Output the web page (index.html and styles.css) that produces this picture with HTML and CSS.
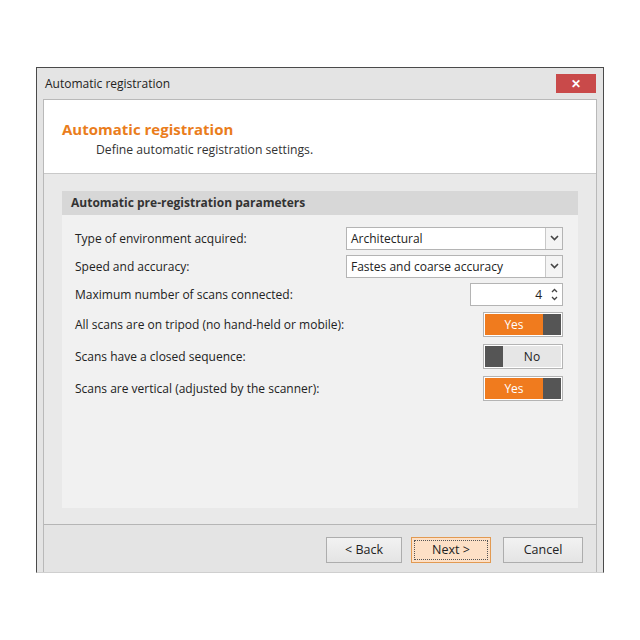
FILE: index.html
```html
<!DOCTYPE html>
<html>
  <head>
    <title>Automatic registration</title>
    <link rel="stylesheet" href="styles.css">
  </head>
  <body>
    <div class="window">
      <div class="titlebar">
        <span class="caption">Automatic registration</span>
        <a class="close">&#x2715;</a>
      </div>
      <div class="content">
        <div class="header">
          <div class="title">Automatic registration</div>
          <div class="subtitle">Define automatic registration settings.</div>
        </div>
        <div class="body">
          <div class="group">
            <div class="group-title">Automatic pre-registration parameters</div>
            <div class="rows">
              <div class="row">
                <span class="label">Type of environment acquired:</span>
                <div class="combo">
                  <span class="value">Architectural</span>
                  <span class="arrow"><svg width="9" height="6" viewBox="0 0 9 6"><path d="M1 1l3.5 3.5L8 1" fill="none" stroke="#444" stroke-width="1.6"/></svg></span>
                </div>
              </div>
              <div class="row">
                <span class="label">Speed and accuracy:</span>
                <div class="combo">
                  <span class="value">Fastes and coarse accuracy</span>
                  <span class="arrow"><svg width="9" height="6" viewBox="0 0 9 6"><path d="M1 1l3.5 3.5L8 1" fill="none" stroke="#444" stroke-width="1.6"/></svg></span>
                </div>
              </div>
              <div class="row">
                <span class="label">Maximum number of scans connected:</span>
                <div class="spin">
                  <span class="value">4</span>
                  <span class="spin-btns">
                    <svg width="7" height="5" viewBox="0 0 7 5"><path d="M1 4l2.5-2.5L6 4" fill="none" stroke="#444" stroke-width="1.3"/></svg>
                    <svg width="7" height="5" viewBox="0 0 7 5"><path d="M1 1l2.5 2.5L6 1" fill="none" stroke="#444" stroke-width="1.3"/></svg>
                  </span>
                </div>
              </div>
              <div class="row tall">
                <span class="label">All scans are on tripod (no hand-held or mobile):</span>
                <div class="toggle on"><span class="text">Yes</span><span class="knob"></span></div>
              </div>
              <div class="row tall">
                <span class="label">Scans have a closed sequence:</span>
                <div class="toggle off"><span class="knob"></span><span class="text">No</span></div>
              </div>
              <div class="row tall">
                <span class="label">Scans are vertical (adjusted by the scanner):</span>
                <div class="toggle on"><span class="text">Yes</span><span class="knob"></span></div>
              </div>
            </div>
          </div>
        </div>
        <div class="footer">
          <button class="btn">&lt; Back</button>
          <button class="btn default">Next &gt;</button>
          <button class="btn cancel">Cancel</button>
        </div>
      </div>
    </div>
  </body>
</html>
```

FILE: styles.css
```css
body {
  margin: 0;
  padding: 0;
  background: #fff;
  font-family: "Open Sans", "Noto Sans", sans-serif;
  color: #222;
}
.window {
  margin: 67px 0 0 36px;
  width: 566px;
  height: 504px;
  border: 1px solid #4a4a4a;
  border-bottom-color: #cfcfcf;
  background: #e4e4e4;
  display: flex;
  flex-direction: column;
}
.titlebar {
  height: 31px;
  display: flex;
  align-items: center;
  justify-content: space-between;
  padding: 0 7px 0 8px;
}
.caption {
  font-size: 12px;
  color: #222;
}
.close {
  width: 40px;
  height: 19px;
  background: #c94a4a;
  color: #fff;
  font-size: 12px;
  font-weight: bold;
  display: flex;
  align-items: center;
  justify-content: center;
}
.content {
  flex: 1;
  margin: 0 6px 0 6px;
  border: 1px solid #b9b9b9;
  border-bottom: none;
  display: flex;
  flex-direction: column;
}
.header {
  background: #fff;
  height: 73px;
  border-bottom: 1px solid #c9c9c9;
  padding-left: 18px;
}
.title {
  color: #ea7d1c;
  font-weight: bold;
  font-size: 15px;
  margin-top: 19px;
}
.subtitle {
  font-size: 12.2px;
  margin-left: 34px;
  margin-top: 2px;
  color: #333;
}
.body {
  background: #e9e9e9;
  padding: 17px 18px 16px 18px;
  border-bottom: 1px solid #b5b5b5;
}
.group {
  background: #f1f1f1;
  height: 317px;
}
.group-title {
  background: #d7d7d7;
  height: 24px;
  line-height: 24px;
  padding-left: 9px;
  font-weight: bold;
  font-size: 12px;
  color: #333;
}
.rows {
  padding: 9px 15px 0 13px;
}
.row {
  display: flex;
  align-items: center;
  justify-content: space-between;
  height: 28px;
}
.row.tall {
  height: 32px;
}
.label {
  font-size: 12px;
  color: #222;
}
.combo, .spin {
  height: 21px;
  border: 1px solid #b4b4b4;
  background: #fff;
  display: flex;
  font-size: 12px;
}
.combo {
  width: 215px;
}
.combo .value {
  flex: 1;
  padding-left: 4px;
  line-height: 21px;
}
.combo .arrow {
  width: 16px;
  border-left: 1px solid #c8c8c8;
  background: #f4f4f4;
  display: flex;
  align-items: center;
  justify-content: center;
}
.spin {
  width: 91px;
}
.spin .value {
  flex: 1;
  text-align: right;
  padding-right: 5px;
  line-height: 21px;
}
.spin-btns {
  width: 15px;
  display: flex;
  flex-direction: column;
  align-items: center;
  justify-content: center;
  gap: 3px;
}
.toggle {
  width: 76px;
  height: 21px;
  border: 1px solid #b4b4b4;
  padding: 1px;
  display: flex;
  background: #fff;
}
.toggle .knob {
  width: 18px;
  background: #555;
}
.toggle .text {
  flex: 1;
  text-align: center;
  font-size: 12px;
  line-height: 21px;
}
.toggle.on .text {
  background: #f07b1e;
  color: #fff;
}
.toggle.off .text {
  background: #e6e6e6;
  color: #222;
}
.footer {
  flex: 1;
  display: flex;
  justify-content: flex-end;
  align-items: center;
  padding-right: 13px;
  gap: 9px;
}
.btn {
  width: 76px;
  height: 26px;
  border: 1px solid #adadad;
  background: linear-gradient(#f2f2f2, #e4e4e4);
  font-family: inherit;
  font-size: 12.5px;
  color: #222;
  margin-top: 2px;
}
.btn.default {
  width: 80px;
  border-color: #e29a52;
  background: #fde0c6;
  outline: 1px dotted #555;
  outline-offset: -4px;
}
.btn.cancel {
  width: 80px;
  margin-left: 3px;
}
```
